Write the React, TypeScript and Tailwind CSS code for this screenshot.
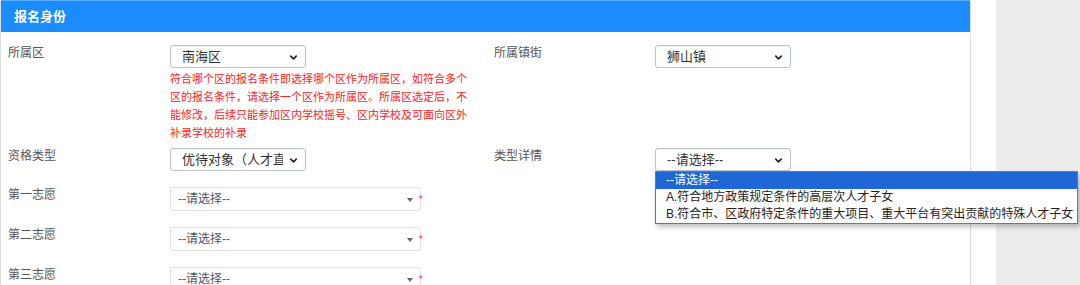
import React from 'react';
import { ChevronDown } from 'lucide-react';

const FONT = "font-['Liberation_Sans','Noto_Sans_CJK_SC',sans-serif]";

// Native-looking select box with the chevron
function NativeSelect({ value, className = '' }: { value: string; className?: string }) {
  return (
    <div
      className={`relative flex h-[23px] w-[136px] items-center rounded-[3px] border border-[#b8c2cc] bg-white pl-[11px] pr-[22px] shadow-[inset_0_1px_1px_rgba(0,0,0,0.05)] ${className}`}
    >
      <span className="block overflow-hidden whitespace-nowrap text-[13px] leading-none text-[#333]">{value}</span>
      <ChevronDown className="absolute right-[6px] top-[6px] h-[11px] w-[11px] text-[#222]" strokeWidth={3.5} />
    </div>
  );
}

// Wide plugin-style select with a little caret and a red asterisk
function ChoiceBox() {
  return (
    <div className="relative flex h-[24px] w-[251px] items-center rounded-[3px] border border-[#e0e0e0] bg-white pl-[7px]">
      <span className="text-[12px] leading-none text-[#555]">--请选择--</span>
      <span className="absolute right-[7px] top-[10px] h-0 w-0 border-x-[3px] border-t-[4px] border-x-transparent border-t-[#666]" />
      <span className="absolute right-[-3px] top-[6px] text-[11px] leading-none text-[#f44]">*</span>
    </div>
  );
}

const HINT =
  '符合哪个区的报名条件即选择哪个区作为所属区，如符合多个区的报名条件，请选择一个区作为所属区。所属区选定后，不能修改，后续只能参加区内学校摇号、区内学校及可面向区外补录学校的补录';

export default function App() {
  return (
    <div className={`flex h-[285px] w-[1080px] overflow-hidden bg-white ${FONT}`}>
      {/* Form panel */}
      <div className="w-[971px] shrink-0 border-x border-[#dcdcdc]">
        <div className="flex h-[32px] items-center border-t border-[#5aaeff] bg-[#1a8cff] pl-[13px] text-[13px] font-bold text-white">
          报名身份
        </div>

        {/* Row 1 */}
        <div className="mt-[13px] flex">
          <div className="flex w-[493px]">
            <div className="w-[169px] pl-[7px] pt-[1px] text-[12px] leading-[14px] text-[#555]">所属区</div>
            <div>
              <NativeSelect value="南海区" />
              <p className="mt-[2px] w-[302px] text-[11px] leading-[18px] text-[#f22]">{HINT}</p>
            </div>
          </div>
          <div className="flex">
            <div className="w-[161px] pt-[1px] text-[12px] leading-[14px] text-[#555]">所属镇街</div>
            <NativeSelect value="狮山镇" />
          </div>
        </div>

        {/* Row 2 */}
        <div className="mt-[6px] flex">
          <div className="flex w-[493px]">
            <div className="w-[169px] pl-[7px] pt-[1px] text-[12px] leading-[14px] text-[#555]">资格类型</div>
            <NativeSelect value="优待对象（人才直接子女）" />
          </div>
          <div className="flex">
            <div className="w-[161px] pt-[1px] text-[12px] leading-[14px] text-[#555]">类型详情</div>
            <div className="relative">
              <NativeSelect value="--请选择--" />
              <ul className="absolute left-0 top-[23px] z-10 w-[423px] whitespace-nowrap border border-[#767676] bg-white text-[12px] leading-[17px] text-[#222] shadow-[2px_3px_5px_rgba(0,0,0,0.25)]">
                <li className="bg-[#1f66d6] pl-[10px] text-white">--请选择--</li>
                <li className="pl-[10px]">A.符合地方政策规定条件的高层次人才子女</li>
                <li className="pl-[10px]">B.符合市、区政府特定条件的重大项目、重大平台有突出贡献的特殊人才子女</li>
              </ul>
            </div>
          </div>
        </div>

        {/* Wish rows */}
        <div className="mt-[16px] flex flex-col gap-[16px]">
          {['第一志愿', '第二志愿', '第三志愿'].map((label) => (
            <div key={label} className="flex">
              <div className="w-[169px] pl-[7px] pt-[1px] text-[12px] leading-[14px] text-[#555]">{label}</div>
              <ChoiceBox />
            </div>
          ))}
        </div>
      </div>

      <div className="w-[25px] shrink-0 bg-white" />
      <div className="flex-1 bg-[#ececec]" />
    </div>
  );
}
